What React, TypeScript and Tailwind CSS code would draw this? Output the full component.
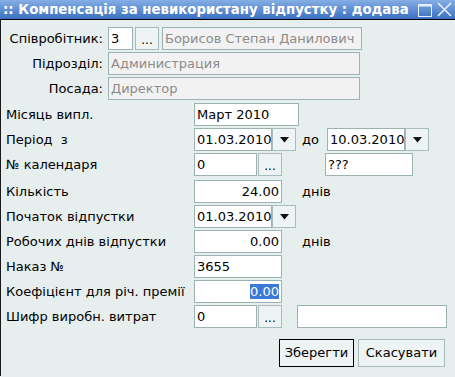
import React from 'react';

const font = { fontFamily: '"DejaVu Sans", "Liberation Sans", sans-serif' };

function Field({ w, value, disabled, right, selected }: { w: string; value?: string; disabled?: boolean; right?: boolean; selected?: boolean }) {
    return (
        <div
            className={`${w} h-[23px] border border-[#9cb3b3] flex items-center px-[2px] overflow-hidden whitespace-nowrap ${disabled ? 'bg-[#f2f2f2] text-[#8c8c8c]' : 'bg-white text-black'} ${right ? 'justify-end' : ''}`}
        >
            {selected ? <span className="bg-[#3b78d8] text-white leading-[15px]">{value}</span> : value}
        </div>
    );
}

function DotsButton() {
    return (
        <div className="w-[24px] h-[23px] border border-[#a8bcbc] bg-[#eef3f3] flex items-center justify-center text-black text-[12px] pt-[3px]">
            ...
        </div>
    );
}

function DropButton() {
    return (
        <div className="w-[24px] h-[23px] border border-[#a8bcbc] bg-[#eef3f3] flex items-center justify-center">
            <svg width="9" height="6" viewBox="0 0 9 6">
                <path d="M0 0 H9 L4.5 5.5 Z" fill="#111" />
            </svg>
        </div>
    );
}

function Row({ label, children, className = '' }: { label: string; children: React.ReactNode; className?: string }) {
    return (
        <div className={`flex items-center h-[23px] ${className}`}>
            <div className="w-[188px] shrink-0 whitespace-pre">{label}</div>
            <div className="flex items-center">{children}</div>
        </div>
    );
}

function TopRow({ label, children }: { label: string; children: React.ReactNode }) {
    return (
        <div className="flex items-center h-[23px]">
            <div className="w-[97px] shrink-0 text-right whitespace-nowrap">{label}</div>
            <div className="flex items-center ml-[5px] gap-[2px]">{children}</div>
        </div>
    );
}

export default function App() {
    return (
        <div className="w-[455px] h-[377px] overflow-hidden bg-[#e6eeee] text-[13px] text-black" style={font}>
            <div className="h-[20px] bg-gradient-to-b from-[#85aee4] to-[#3a6fc2] flex items-center text-white font-bold text-[13.3px] pl-[3px] border-b border-black">
                <span className="whitespace-nowrap w-[413px]">:: Компенсація за невикористану відпустку : додава</span>
                <svg width="14" height="14" viewBox="0 0 14 14" className="ml-[2px]">
                    <rect x="0.5" y="1.5" width="13" height="12" fill="none" stroke="#e8eef8" />
                    <rect x="0.5" y="1.5" width="13" height="2" fill="#e8eef8" />
                </svg>
                <svg width="15" height="15" viewBox="0 0 15 15" className="ml-[5px]">
                    <path d="M1 1 L14 14 M14 1 L1 14" stroke="#e8eef8" strokeWidth="1.6" />
                </svg>
            </div>
            <div className="border-l border-[#1a1a1a] h-[356px] pl-[5px] pt-[7px] flex flex-col gap-[2px]">
                <TopRow label="Співробітник:">
                    <Field w="w-[25px]" value="3" />
                    <DotsButton />
                    <Field w="w-[200px] ml-[1px]" value="Борисов Степан Данилович" disabled />
                </TopRow>
                <TopRow label="Підрозділ:">
                    <Field w="w-[252px]" value="Администрация" disabled />
                </TopRow>
                <TopRow label="Посада:">
                    <Field w="w-[252px]" value="Директор" disabled />
                </TopRow>
                <Row label="Місяць випл." className="mt-[1px]">
                    <Field w="w-[105px]" value="Март 2010" />
                </Row>
                <Row label="Період  з">
                    <Field w="w-[78px]" value="01.03.2010" />
                    <DropButton />
                    <span className="ml-[6px] w-[25px]">до</span>
                    <Field w="w-[78px]" value="10.03.2010" />
                    <DropButton />
                </Row>
                <Row label="№ календаря">
                    <Field w="w-[63px]" value="0" />
                    <div className="ml-[1px]"><DotsButton /></div>
                    <Field w="w-[88px] ml-[43px]" value="???" />
                </Row>
                <Row label="Кількість" className="mt-[2px]">
                    <Field w="w-[88px]" value="24.00" right />
                    <span className="ml-[20px]">днів</span>
                </Row>
                <Row label="Початок відпустки">
                    <Field w="w-[78px]" value="01.03.2010" />
                    <DropButton />
                </Row>
                <Row label="Робочих днів відпустки">
                    <Field w="w-[88px]" value="0.00" right />
                    <span className="ml-[20px]">днів</span>
                </Row>
                <Row label="Наказ №">
                    <Field w="w-[88px]" value="3655" />
                </Row>
                <Row label="Коефіцієнт для річ. премії">
                    <Field w="w-[88px]" value="0.00" right selected />
                </Row>
                <Row label="Шифр виробн. витрат">
                    <Field w="w-[63px]" value="0" />
                    <div className="ml-[1px]"><DotsButton /></div>
                    <Field w="w-[150px] ml-[15px]" value="" />
                </Row>
                <div className="flex justify-end gap-[4px] mt-[9px] pr-[10px]">
                    <button className="h-[28px] w-[75px] border border-black bg-[#eef3f3] text-[13px]" style={font}>Зберегти</button>
                    <button className="h-[28px] w-[87px] border border-[#a8bcbc] bg-[#eef3f3] text-[13px]" style={font}>Скасувати</button>
                </div>
            </div>
        </div>
    );
}
